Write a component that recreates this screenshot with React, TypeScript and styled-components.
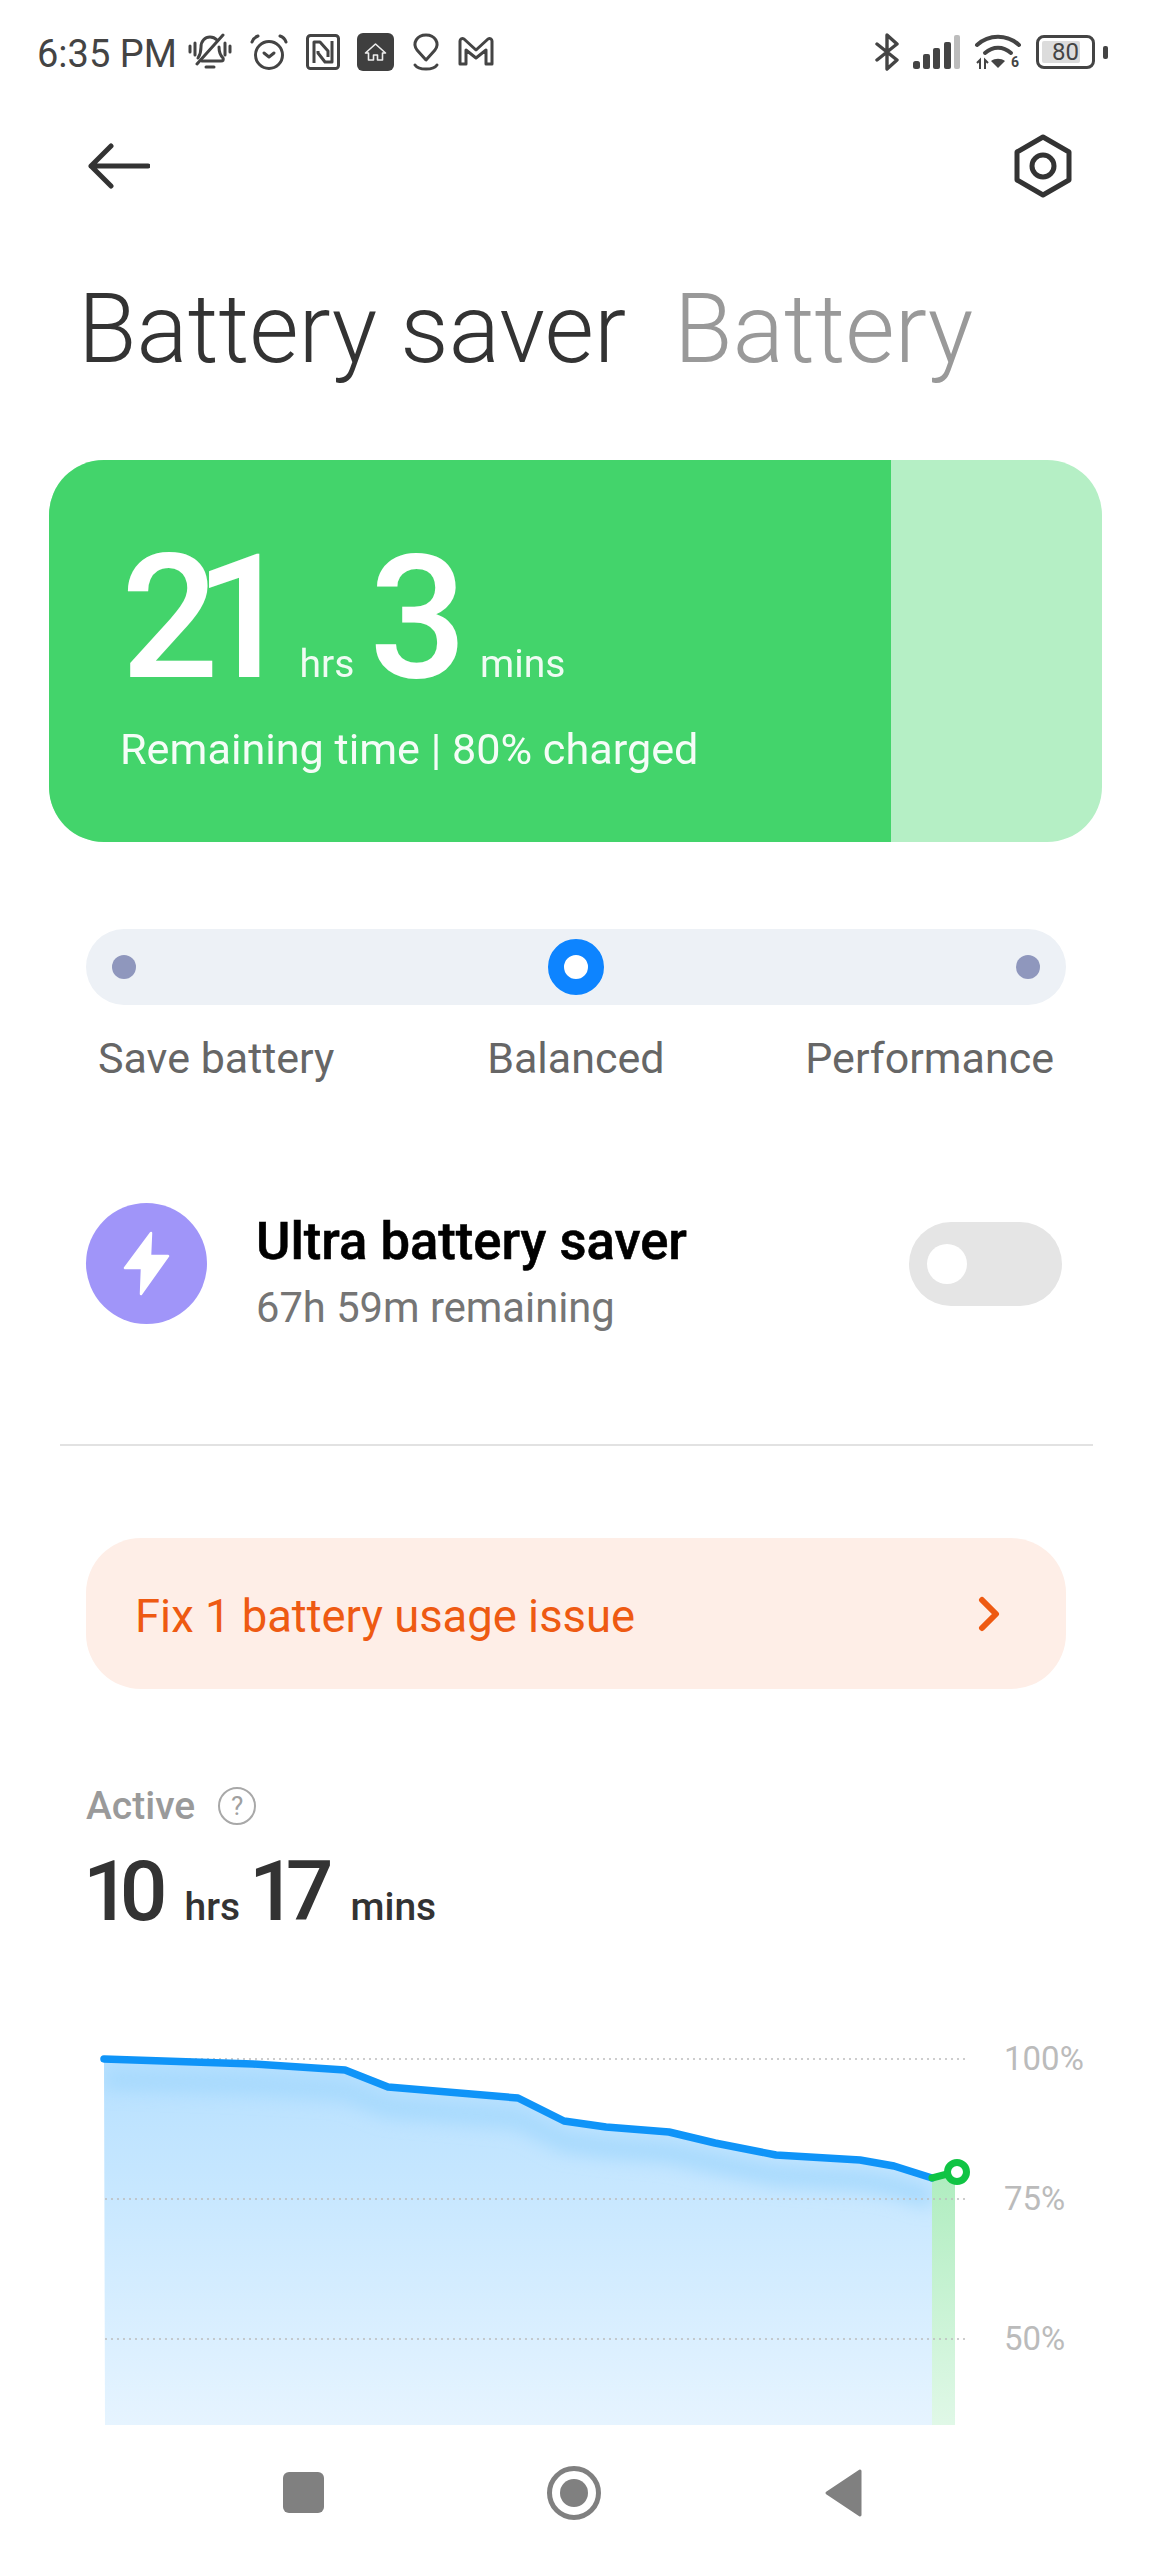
import React from 'react';
import styled, { createGlobalStyle } from 'styled-components';

const GlobalStyle = createGlobalStyle`
  html, body {
    margin: 0;
    padding: 0;
    background: #fff;
  }
  body {
    font-family: Roboto, 'Liberation Sans', sans-serif;
  }
`;

const Page = styled.div`
  width: 1152px;
  height: 2560px;
  overflow: hidden;
  background: #fff;
  display: flex;
  flex-direction: column;
`;

const StatusBar = styled.div`
  height: 104px;
  padding: 0 44px 0 37px;
  box-sizing: border-box;
  display: flex;
  align-items: center;
  justify-content: space-between;
  color: #444;
`;

const StatusGroup = styled.div<{ $gap: number }>`
  display: flex;
  align-items: center;
  gap: ${p => p.$gap}px;
`;

const Clock = styled.span`
  font-size: 38px;
  padding-top: 3px;
  margin-right: -6px;
`;

const BatteryWrap = styled.div`
  display: flex;
  align-items: center;
  gap: 8px;
  margin-left: 1px;
`;

const BatteryBody = styled.div`
  position: relative;
  width: 59px;
  height: 34px;
  box-sizing: border-box;
  border: 3px solid #444;
  border-radius: 8px;
  display: flex;
  align-items: center;
  justify-content: center;
  font-size: 24px;
  color: #444;
`;

const BatteryFill = styled.div`
  position: absolute;
  left: 3px;
  top: 3px;
  bottom: 3px;
  width: 38px;
  background: #dcdcdc;
  border-radius: 2px;
`;

const BatteryText = styled.span`
  position: relative;
`;

const BatteryTip = styled.div`
  width: 5px;
  height: 13px;
  border-radius: 2px;
  background: #444;
`;

const Toolbar = styled.div`
  height: 124px;
  padding: 0 80px 0 88px;
  display: flex;
  align-items: center;
  justify-content: space-between;
`;

const TitleRow = styled.div`
  height: 232px;
  padding: 46px 0 0 78px;
  box-sizing: border-box;
  display: flex;
  gap: 48px;
  font-size: 95.5px;
  font-weight: 300;
  line-height: 110px;
  white-space: nowrap;
`;

const Title = styled.span<{ $muted?: boolean }>`
  color: ${p => (p.$muted ? '#999' : '#333')};
`;

const RemainingCard = styled.div`
  margin: 0 50px 0 49px;
  height: 382px;
  border-radius: 55px;
  overflow: hidden;
  display: flex;
  background: #b5efc5;
`;

const RemainingFill = styled.div`
  width: 842px;
  background: #43d46b;
  color: #fff;
  box-sizing: border-box;
  padding: 77px 0 0 72px;
`;

const TimeLine = styled.div`
  display: flex;
  align-items: baseline;
  height: 162px;
`;

const HugeNumber = styled.span`
  font-size: 172px;
  line-height: 162px;
  font-weight: 500;
  letter-spacing: -24px;
`;

const HugeUnit = styled.span<{ $left: number }>`
  font-size: 39px;
  margin: 0 15px 0 ${p => p.$left}px;
  opacity: 0.92;
`;

const RemainingText = styled.div`
  font-size: 43.2px;
  line-height: 50px;
  margin-top: 26px;
  margin-left: -1px;
  opacity: 0.95;
`;

const ModeTrack = styled.div`
  margin: 87px 86px 0;
  height: 76px;
  border-radius: 38px;
  background: #edf1f6;
  padding: 0 26px;
  display: flex;
  align-items: center;
  justify-content: space-between;
`;

const ModeDot = styled.div`
  width: 24px;
  height: 24px;
  border-radius: 50%;
  background: #8f97bd;
`;

const ModeThumb = styled.div`
  width: 24px;
  height: 24px;
  border-radius: 50%;
  border: 16px solid #0d84ff;
  background: #fff;
`;

const ModeLabels = styled.div`
  margin: 28px 98px 0;
  display: flex;
  justify-content: space-between;
  font-size: 43px;
  line-height: 50px;
  color: #666;
`;

const ModeCenterLabel = styled.span`
  margin-left: 12px;
`;

const UltraRow = styled.div`
  margin: 120px 90px 0 86px;
  height: 121px;
  display: flex;
  align-items: center;
`;

const UltraIcon = styled.div`
  width: 121px;
  height: 121px;
  border-radius: 50%;
  background: #a095f9;
  display: flex;
  align-items: center;
  justify-content: center;
`;

const UltraText = styled.div`
  flex: 1;
  margin-left: 49px;
  padding-top: 17px;
`;

const UltraTitle = styled.div`
  font-size: 52.6px;
  line-height: 58px;
  font-weight: 500;
  color: #000;
  -webkit-text-stroke: 0.6px #000;
`;

const UltraSub = styled.div`
  font-size: 41.7px;
  line-height: 48px;
  margin-top: 14px;
  color: #757575;
`;

const Toggle = styled.div`
  width: 153px;
  height: 84px;
  border-radius: 42px;
  background: #e5e5e5;
  box-sizing: border-box;
  padding-left: 18px;
  display: flex;
  align-items: center;
`;

const ToggleKnob = styled.div`
  width: 40px;
  height: 40px;
  border-radius: 50%;
  background: #fff;
`;

const Divider = styled.div`
  margin: 120px 59px 0 60px;
  height: 2px;
  background: #e2e2e2;
`;

const IssueCard = styled.div`
  margin: 92px 86px 0;
  height: 151px;
  border-radius: 55px;
  background: #feeee7;
  padding: 0 65px 0 49px;
  display: flex;
  align-items: center;
  justify-content: space-between;
  font-size: 45.4px;
  color: #ee5a12;
`;

const IssueText = styled.span`
  padding-top: 6px;
`;

const ActiveLabel = styled.div`
  margin: 95px 0 0 86px;
  height: 44px;
  display: flex;
  align-items: center;
  gap: 23px;
  font-size: 39px;
  font-weight: 500;
  color: #9a9a9a;
`;

const HelpMark = styled.span`
  width: 38px;
  height: 38px;
  box-sizing: border-box;
  border: 2.5px solid #a8a8a8;
  border-radius: 50%;
  display: flex;
  align-items: center;
  justify-content: center;
  font-size: 26px;
  font-weight: 400;
  color: #a0a0a0;
`;

const ActiveTime = styled.div`
  margin: 20px 0 0 83px;
  height: 88px;
  display: flex;
  align-items: baseline;
  color: #333;
`;

const ActiveNumber = styled.span`
  font-size: 84px;
  line-height: 88px;
  font-weight: 500;
  letter-spacing: -11px;
`;

const ActiveUnit = styled.span`
  font-size: 39px;
  font-weight: 500;
  margin: 0 9px 0 28px;
`;

const ChartBox = styled.div`
  height: 395px;
  margin-top: 94px;
`;

const ChartSvg = styled.svg`
  display: block;
`;

const ChartLabel = styled.text`
  font-family: Roboto, sans-serif;
  font-size: 33px;
  fill: #bbb;
`;

const NavBar = styled.div`
  height: 135px;
  padding: 0 288px 0 283px;
  display: flex;
  align-items: center;
  justify-content: space-between;
`;

const NavSquare = styled.div`
  width: 41px;
  height: 41px;
  border-radius: 6px;
  background: #808080;
`;

const NavCircle = styled.div`
  width: 54px;
  height: 54px;
  box-sizing: border-box;
  border: 5px solid #808080;
  border-radius: 50%;
  display: flex;
  align-items: center;
  justify-content: center;
`;

const NavCircleDot = styled.div`
  width: 28px;
  height: 28px;
  border-radius: 50%;
  background: #808080;
`;

const line: [number, number][] = [
  [104, 2059], [253, 2064], [345, 2070], [388, 2087], [518, 2098], [564, 2121],
  [606, 2127], [669, 2132], [715, 2143], [776, 2155], [860, 2160], [894, 2166], [932, 2178],
];
const linePoints = line.map(p => p.join(',')).join(' ');
const areaPath = `M105 2425 L${line.map(p => p.join(' ')).join(' L')} L932 2425 Z`;

const BellOffIcon = () => (
  <svg width="44" height="38" viewBox="0 0 44 38" fill="none" stroke="#444" strokeWidth="3" strokeLinecap="round" strokeLinejoin="round">
    <path d="M2 13v6M7 10v12M37 10v12M42 13v6" />
    <path d="M10 25c2-3 3-6 3-11 0-6 4-10 9-10 3 0 5 1 7 3M31 14c0 5 1 8 4 11 1 2 0 3-2 3H14" />
    <path d="M18 34h8" />
    <path d="M9 31L35 2" />
  </svg>
);

const AlarmIcon = () => (
  <svg width="40" height="38" viewBox="0 0 40 38" fill="none" stroke="#444" strokeWidth="3" strokeLinecap="round" strokeLinejoin="round">
    <circle cx="20" cy="22" r="13.5" />
    <path d="M15 20l5 4 5-4" />
    <path d="M3 9c1-3 3-5 6-6M37 9c-1-3-3-5-6-6" />
  </svg>
);

const NfcIcon = () => (
  <svg width="34" height="38" viewBox="0 0 34 38" fill="none" stroke="#444" strokeWidth="3" strokeLinejoin="round">
    <rect x="1.5" y="2.5" width="31" height="33" rx="3" />
    <path d="M8 30V9h6l8 9v6" />
    <path d="M26 8v21h-7l-7-9v-2" />
  </svg>
);

const HomeChipIcon = () => (
  <svg width="37" height="38" viewBox="0 0 37 38">
    <rect width="37" height="38" rx="6" fill="#3f3f3f" />
    <path d="M18.5 11l-10 9h3v7h5v-5h4v5h5v-7h3z" fill="none" stroke="#eee" strokeWidth="1.6" strokeLinejoin="round" />
  </svg>
);

const PinIcon = () => (
  <svg width="30" height="38" viewBox="0 0 30 38" fill="none" stroke="#444" strokeWidth="3" strokeLinecap="round" strokeLinejoin="round">
    <path d="M15 27l-9-10c-5-7 0-15 9-15s14 8 9 15z" />
    <path d="M4 32c2 3 5 4 11 4s9-1 11-4" />
  </svg>
);

const MailMIcon = () => (
  <svg width="36" height="30" viewBox="0 0 36 30" fill="none" stroke="#444" strokeWidth="3" strokeLinejoin="round">
    <path d="M2 4v23h6V13l10 8 10-8v14h6V4c0-2-2-3-4-2L18 13 6 2C4 1 2 2 2 4z" />
  </svg>
);

const BluetoothIcon = () => (
  <svg width="26" height="38" viewBox="0 0 26 38" fill="none" stroke="#444" strokeWidth="3.4" strokeLinecap="round" strokeLinejoin="round">
    <path d="M3 11l20 16-10 9V2l10 9L3 27" />
  </svg>
);

const SignalIcon = () => (
  <svg width="48" height="34" viewBox="0 0 48 34">
    <rect x="0" y="26" width="7" height="8" rx="2.5" fill="#444" />
    <rect x="10" y="19" width="7" height="15" rx="2" fill="#444" />
    <rect x="20" y="13" width="7" height="21" rx="2" fill="#444" />
    <rect x="31" y="7" width="7" height="27" rx="2" fill="#444" />
    <rect x="41" y="0" width="6" height="34" rx="2" fill="#bcbcbc" />
  </svg>
);

const WifiIcon = () => (
  <svg width="48" height="38" viewBox="0 0 48 38">
    <g fill="none" stroke="#444" strokeWidth="4" strokeLinecap="round">
      <path d="M3 12c12-11 30-11 42 0" />
      <path d="M11 20c8-7 18-7 26 0" />
    </g>
    <path d="M17 28c4-3 10-3 14 0l-7 7z" fill="#444" />
    <path d="M3 30l3-3v9M11 36v-9l3 3" fill="none" stroke="#444" strokeWidth="2" />
    <text x="37" y="34" fontFamily="Roboto, sans-serif" fontWeight="700" fontSize="14" fill="#444">6</text>
  </svg>
);

const BackArrow = () => (
  <svg width="62" height="46" viewBox="0 0 62 46" fill="none" stroke="#333" strokeWidth="5" strokeLinecap="round" strokeLinejoin="round">
    <path d="M60 23H3M23 3L3 23l20 20" />
  </svg>
);

const SettingsHex = () => (
  <svg width="58" height="64" viewBox="0 0 58 64" fill="none" stroke="#333" strokeWidth="5" strokeLinejoin="round">
    <path d="M29 3l26 15v28L29 61 3 46V18z" />
    <circle cx="29" cy="32" r="11" />
  </svg>
);

const BoltIcon = () => (
  <svg width="49" height="65" viewBox="0 0 49 65">
    <path d="M29 2L3 37h17l-1 26 27-38H28z" fill="#fff" stroke="#fff" strokeWidth="2.5" strokeLinejoin="round" />
  </svg>
);

const ChevronIcon = () => (
  <svg width="24" height="36" viewBox="0 0 24 36" fill="none" stroke="#ee5a12" strokeWidth="6" strokeLinecap="round" strokeLinejoin="round">
    <path d="M5 4l14 14L5 32" />
  </svg>
);

const NavBack = () => (
  <svg width="40" height="50" viewBox="0 0 40 50">
    <path d="M36 3L3 25l33 22z" fill="#808080" stroke="#808080" strokeWidth="3" strokeLinejoin="round" />
  </svg>
);

const BatteryChart = () => (
  <ChartSvg width="1152" height="395" viewBox="0 2030 1152 395">
    <defs>
      <linearGradient id="areaFill" x1="0" y1="0" x2="0" y2="1">
        <stop offset="0" stopColor="#b6e0ff" />
        <stop offset="1" stopColor="#e6f4ff" />
      </linearGradient>
      <linearGradient id="nowFill" x1="0" y1="0" x2="0" y2="1">
        <stop offset="0" stopColor="#b0edc0" />
        <stop offset="1" stopColor="#e0f8e7" />
      </linearGradient>
      <clipPath id="areaClip">
        <path d={areaPath} />
      </clipPath>
      <filter id="soft" x="-5%" y="-30%" width="110%" height="160%">
        <feGaussianBlur stdDeviation="9" />
      </filter>
    </defs>
    <path d={areaPath} fill="url(#areaFill)" />
    <g clipPath="url(#areaClip)">
      <polyline points={linePoints} fill="none" stroke="#a6d9fd" strokeWidth="20" filter="url(#soft)" transform="translate(0 20)" />
    </g>
    <rect x="932" y="2178" width="23" height="247" fill="url(#nowFill)" />
    {[2059, 2199, 2339].map(y => (
      <line key={y} x1="105" x2="968" y1={y} y2={y} stroke="#bdbdbd" strokeWidth="2" strokeDasharray="2 4" opacity="0.75" />
    ))}
    <polyline points={linePoints} fill="none" stroke="#0f94f8" strokeWidth="7.5" strokeLinecap="round" strokeLinejoin="round" />
    <path d="M932 2178L955 2172" stroke="#10c444" strokeWidth="7" strokeLinecap="round" />
    <circle cx="957" cy="2172" r="9.5" fill="#fff" stroke="#10c444" strokeWidth="7" />
    <ChartLabel x="1004" y="2070">100%</ChartLabel>
    <ChartLabel x="1004" y="2210">75%</ChartLabel>
    <ChartLabel x="1004" y="2350">50%</ChartLabel>
  </ChartSvg>
);

export default function App() {
  return (
    <Page>
      <GlobalStyle />
      <StatusBar>
        <StatusGroup $gap={17}>
          <Clock>6:35 PM</Clock>
          <BellOffIcon />
          <AlarmIcon />
          <NfcIcon />
          <HomeChipIcon />
          <PinIcon />
          <MailMIcon />
        </StatusGroup>
        <StatusGroup $gap={13}>
          <BluetoothIcon />
          <SignalIcon />
          <WifiIcon />
          <BatteryWrap>
            <BatteryBody>
              <BatteryFill />
              <BatteryText>80</BatteryText>
            </BatteryBody>
            <BatteryTip />
          </BatteryWrap>
        </StatusGroup>
      </StatusBar>

      <Toolbar>
        <BackArrow />
        <SettingsHex />
      </Toolbar>

      <TitleRow>
        <Title>Battery saver</Title>
        <Title $muted>Battery</Title>
      </TitleRow>

      <RemainingCard>
        <RemainingFill>
          <TimeLine>
            <HugeNumber>21</HugeNumber>
            <HugeUnit $left={31}>hrs</HugeUnit>
            <HugeNumber>3</HugeNumber>
            <HugeUnit $left={37}>mins</HugeUnit>
          </TimeLine>
          <RemainingText>Remaining time | 80% charged</RemainingText>
        </RemainingFill>
      </RemainingCard>

      <ModeTrack>
        <ModeDot />
        <ModeThumb />
        <ModeDot />
      </ModeTrack>
      <ModeLabels>
        <span>Save battery</span>
        <ModeCenterLabel>Balanced</ModeCenterLabel>
        <span>Performance</span>
      </ModeLabels>

      <UltraRow>
        <UltraIcon>
          <BoltIcon />
        </UltraIcon>
        <UltraText>
          <UltraTitle>Ultra battery saver</UltraTitle>
          <UltraSub>67h 59m remaining</UltraSub>
        </UltraText>
        <Toggle>
          <ToggleKnob />
        </Toggle>
      </UltraRow>

      <Divider />

      <IssueCard>
        <IssueText>Fix 1 battery usage issue</IssueText>
        <ChevronIcon />
      </IssueCard>

      <ActiveLabel>
        Active
        <HelpMark>?</HelpMark>
      </ActiveLabel>
      <ActiveTime>
        <ActiveNumber>10</ActiveNumber>
        <ActiveUnit>hrs</ActiveUnit>
        <ActiveNumber>17</ActiveNumber>
        <ActiveUnit>mins</ActiveUnit>
      </ActiveTime>

      <ChartBox>
        <BatteryChart />
      </ChartBox>

      <NavBar>
        <NavSquare />
        <NavCircle>
          <NavCircleDot />
        </NavCircle>
        <NavBack />
      </NavBar>
    </Page>
  );
}
